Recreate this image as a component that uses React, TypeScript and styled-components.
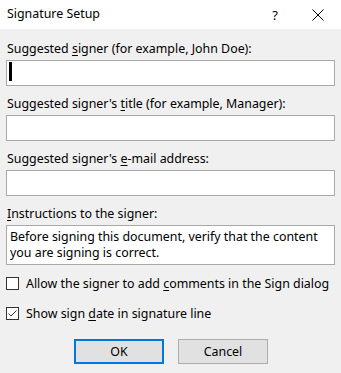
import styled, { createGlobalStyle } from 'styled-components';

const GlobalStyle = createGlobalStyle`
  html, body {
    margin: 0;
    padding: 0;
    background: #f0f0f0;
  }
  body {
    font-family: 'Noto Sans', 'Liberation Sans', sans-serif;
    font-size: 12.4px;
    color: #000;
  }
`;

const Dialog = styled.div`
  width: 341px;
  height: 373px;
  display: flex;
  flex-direction: column;
  background: #f0f0f0;
  overflow: hidden;
`;

const TitleBar = styled.div`
  height: 29px;
  background: #fff;
  display: flex;
  align-items: center;
  padding-left: 7px;
  flex-shrink: 0;
`;

const Title = styled.span`
  flex: 1;
  padding-bottom: 2px;
`;

const TitleButton = styled.div<{ $w: number }>`
  width: ${(p) => p.$w}px;
  height: 29px;
  display: flex;
  align-items: center;
  justify-content: center;
  font-size: 13px;
`;

const Body = styled.div`
  display: flex;
  flex-direction: column;
  padding: 12px 6px 0 6px;
`;

const Field = styled.div`
  display: flex;
  flex-direction: column;
  margin-bottom: 10px;
`;

const Label = styled.label`
  padding-left: 1px;
  height: 19px;
  line-height: 16px;
  white-space: nowrap;
`;

const Underline = styled.span`
  text-decoration: underline;
  text-underline-offset: 2px;
`;

const TextBox = styled.div<{ $h: number }>`
  height: ${(p) => p.$h}px;
  box-sizing: border-box;
  background: #fff;
  border: 1px solid #a9a9a9;
  padding: 3px 3px;
  line-height: 16px;
  position: relative;
`;

const Caret = styled.span`
  position: absolute;
  left: 2px;
  top: 1px;
  width: 3px;
  height: 19px;
  background: #000;
`;

const CheckRow = styled.div<{ $gap: number }>`
  display: flex;
  align-items: center;
  height: 17px;
  margin-bottom: ${(p) => p.$gap}px;
  white-space: nowrap;
`;

const Box = styled.span`
  width: 13px;
  height: 13px;
  box-sizing: border-box;
  border: 1px solid #333;
  background: #fff;
  margin-right: 7px;
  display: flex;
  align-items: center;
  justify-content: center;
  flex-shrink: 0;
`;

const Buttons = styled.div`
  display: flex;
  gap: 14px;
  padding-left: 68px;
`;

const Button = styled.button<{ $default?: boolean }>`
  width: 90px;
  height: 25px;
  box-sizing: border-box;
  background: #e1e1e1;
  border: ${(p) => (p.$default ? '2px solid #0078d7' : '1px solid #adadad')};
  font-family: inherit;
  font-size: 12.4px;
  color: #000;
  padding: 0;
`;

export default function App() {
  return (
    <>
      <GlobalStyle />
      <Dialog>
        <TitleBar>
          <Title>Signature Setup</Title>
          <TitleButton $w={40}>?</TitleButton>
          <TitleButton $w={46}>
            <svg width="12" height="12" viewBox="0 0 12 12">
              <path d="M0.5 0.5 L11.5 11.5 M11.5 0.5 L0.5 11.5" stroke="#000" strokeWidth="1" />
            </svg>
          </TitleButton>
        </TitleBar>
        <Body>
          <Field>
            <Label>
              Suggested <Underline>s</Underline>igner (for example, John Doe):
            </Label>
            <TextBox $h={26}>
              <Caret />
            </TextBox>
          </Field>
          <Field>
            <Label>
              Suggested signer's <Underline>t</Underline>itle (for example, Manager):
            </Label>
            <TextBox $h={26} />
          </Field>
          <Field>
            <Label>
              Suggested signer's <Underline>e</Underline>-mail address:
            </Label>
            <TextBox $h={26} />
          </Field>
          <Field>
            <Label>
              <Underline>I</Underline>nstructions to the signer:
            </Label>
            <TextBox $h={40}>
              Before signing this document, verify that the content you are signing is correct.
            </TextBox>
          </Field>
          <CheckRow $gap={13}>
            <Box />
            <span>
              Allow the signer to add <Underline>c</Underline>omments in the Sign dialog
            </span>
          </CheckRow>
          <CheckRow $gap={17}>
            <Box>
              <svg width="11" height="11" viewBox="0 0 11 11">
                <path d="M1.5 5.5 L4 8 L9.5 2.5" stroke="#333" strokeWidth="1" fill="none" />
              </svg>
            </Box>
            <span>
              Show sign <Underline>d</Underline>ate in signature line
            </span>
          </CheckRow>
          <Buttons>
            <Button $default>OK</Button>
            <Button>Cancel</Button>
          </Buttons>
        </Body>
      </Dialog>
    </>
  );
}
